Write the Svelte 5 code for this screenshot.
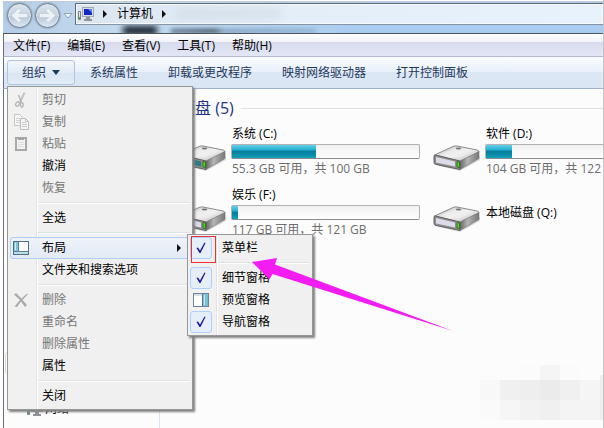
<script>
  const menuBar = ['文件(F)', '编辑(E)', '查看(V)', '工具(T)', '帮助(H)'];
  const commands = ['系统属性', '卸载或更改程序', '映射网络驱动器', '打开控制面板'];

  const organize = [
    { label: '剪切', icon: 'cut', disabled: true },
    { label: '复制', icon: 'copy', disabled: true },
    { label: '粘贴', icon: 'paste', disabled: true },
    { label: '撤消' },
    { label: '恢复', disabled: true },
    null,
    { label: '全选' },
    null,
    { label: '布局', icon: 'layout', submenu: true },
    { label: '文件夹和搜索选项' },
    null,
    { label: '删除', icon: 'delete', disabled: true },
    { label: '重命名', disabled: true },
    { label: '删除属性', disabled: true },
    { label: '属性' },
    null,
    { label: '关闭' }
  ];

  let panes = $state([
    { id: 'menubar', label: '菜单栏', on: true, marked: true },
    null,
    { id: 'details', label: '细节窗格', on: true },
    { id: 'preview', label: '预览窗格', on: false },
    { id: 'navigation', label: '导航窗格', on: true }
  ]);

  const drives = [
    { name: '系统 (C:)', used: 45, info: '55.3 GB 可用，共 100 GB', system: true },
    { name: '软件 (D:)', used: 14, info: '104 GB 可用，共 122 GB' },
    { name: '娱乐 (F:)', used: 3, info: '117 GB 可用，共 121 GB' },
    { name: '本地磁盘 (Q:)' }
  ];

  const mosaic = [
    ['', '', '#fbfbfb', '#f5f5f5', '#fbfbfb', ''],
    ['#f8f8f8', '#f0f0f0', '#eeeeee', '#ebebeb', '#f0f0f0', '#f5f5f5'],
    ['#fafafa', '#f6f6f6', '#f2f2f2', '#f0f0f0', '#f4f4f4', '#f4f4f4']
  ].flat();
</script>

{#snippet glyph(name)}
  <svg class="glyph" width="16" height="16" viewBox="0 0 16 16" aria-hidden="true">
    {#if name === 'cut'}
      <path d="M11.500 0.500 7 10.500" stroke="#c4c4c4" stroke-width="2" fill="none" />
      <path d="M5.500 3 8.500 10.500" stroke="#b2b2b2" stroke-width="1.400" fill="none" />
      <ellipse cx="4.500" cy="12" rx="1.700" ry="2.300" fill="none" stroke="#b5b5b5" stroke-width="1.300" transform="rotate(35 4.500 12)" />
      <ellipse cx="8.800" cy="12.800" rx="1.400" ry="2.200" fill="none" stroke="#b5b5b5" stroke-width="1.300" />
    {:else if name === 'copy'}
      <path d="M1.500 .5h5l3 3v8h-8z" fill="#f6f6f6" stroke="#c6c6c6" />
      <path d="M3 4.500h4M3 6.500h4M3 8.500h4" stroke="#d0d0d0" />
      <path d="M7.500 4.500h5l3 3v8h-8z" fill="#f6f6f6" stroke="#bdbdbd" />
      <path d="M9 8.500h4M9 10.500h5M9 12.500h5M12.500 4.500v3h3" stroke="#c8c8c8" fill="none" />
    {:else if name === 'paste'}
      <rect x="3" y="2" width="10" height="12" fill="#f3f3f3" stroke="#a8a8a8" stroke-width="2" />
      <path d="M5 1h6v3H5z" fill="#a5a5a5" />
      <path d="M5 6.500h6M5 8.500h6M5 10.500h6" stroke="#dedede" />
    {:else if name === 'delete'}
      <path d="M1 2.500 3 1l5.500 5.500L14 1.500l1 .5-5.500 6L14 13l-2 2-4-5.500L4 15l-2.500-.5L7 8z" fill="#aaa" />
    {:else if name === 'layout'}
      <rect x=".5" y="1.500" width="15" height="13" fill="#fff" stroke="#4f6f86" />
      <rect x="1" y="2" width="4" height="9" fill="#7cc6dc" />
      <path d="M2 3h1v7H2z" fill="#d2f1f8" />
      <path d="M5.500 2v9.500M1 11.500h14" stroke="#5e7f94" />
      <path d="M1 12h14v2H1z" fill="#bce0ea" />
    {:else if name === 'preview'}
      <rect x=".5" y="1.500" width="15" height="13" fill="#fff" stroke="#6e8496" />
      <path d="M1 2h14v2H1z" fill="#d8e0e8" />
      <path d="M10 2h5v12h-5z" fill="#78bfd6" />
      <path d="M11 3h1v10h-1z" fill="#c8eaf4" />
      <path d="M9.500 2v12" stroke="#56778e" />
    {:else if name === 'check'}
      <path d="M3.500 8 5 7.500 7 10.500 11.500 2.500 12.500 3 7.500 13H6.500z" fill="#1a1a9c" />
    {/if}
  </svg>
{/snippet}

{#snippet monitor()}
  <svg width="16" height="15" viewBox="0 0 16 15" aria-hidden="true">
    <path d="M.5 4.500h2v8h-2z" fill="#e6e6e6" stroke="#7c8084" />
    <path d="M1 10h1v2H1z" fill="#3ab83a" />
    <rect x="4.500" y=".5" width="11" height="9" fill="#d9dde2" stroke="#a3a8ae" />
    <path d="M6 2h8v6H6z" fill="#1428c8" />
    <path d="M10 2h4v4z" fill="#5d86f2" />
    <path d="M8 10h4v2h2v2H6v-2h2z" fill="#8e9399" />
  </svg>
{/snippet}

{#snippet disk(system)}
  <svg class="disk" width="48" height="28" viewBox="0 0 48 28" aria-hidden="true">
    <defs>
      <linearGradient id="lid" x1="0" y1="0" x2="1" y2="1">
        <stop offset="0" stop-color="#b8b8b8" /><stop offset=".5" stop-color="#f4f4f4" /><stop offset="1" stop-color="#b2b2b2" />
      </linearGradient>
      <linearGradient id="side" x1="0" y1="0" x2="1" y2="0">
        <stop offset="0" stop-color="#666" /><stop offset=".4" stop-color="#b5b5b5" /><stop offset="1" stop-color="#777" />
      </linearGradient>
    </defs>
    <path d="M6 22 27 27 47 16 47 12z" fill="#000" opacity=".12" />
    <path d="M1.500 11 20 2.500Q22 1.600 24 2L44 6Q46 6.500 46 8L27 17.500z" fill="url(#lid)" stroke="#8b8b8b" />
    <path d="M8 10.500 22 4 39 7.500 27 13.500z" fill="#eee" opacity=".7" />
    <ellipse cx="25.500" cy="4.500" rx="2.800" ry="1" fill="#777" />
    <path d="M27 17 46 7.500V14.500L27 25.500z" fill="url(#side)" stroke="#777" stroke-width=".6" />
    <path d="M1 12Q1 11 2.500 11L27 17V25.500L3 20.500Q1 20 1 18.500z" fill="#8d8d90" stroke="#626262" />
    <path d="M3 13 22 17.500V22.500L3 18.500z" fill={system ? '#2d7984' : '#dcdce8'} />
    <path d="M24 17.500 26.500 18V23.500L24 23z" fill="#4fdc1e" stroke="#1f5c10" stroke-width=".7" />
    {#if system}<path d="M8 3 14 2 15 7 9 10z" fill="#3d8f35" />{/if}
  </svg>
{/snippet}

<div class="window">
  <header class="glass">
    <div class="smudge one"></div>
    <div class="smudge two"></div>
    <div class="nav-buttons">
      {#each [['后退', false], ['前进', true]] as [label, forward]}
        <button class="round" aria-label={label}>
          <svg class:forward width="21" height="21" viewBox="0 0 26 26" aria-hidden="true">
            <path d="M3 13 12 4 15.500 7 11.500 10.500H23v5H11.500l4 3.500-3.500 3z" fill="#edf2f6" stroke="#c3ced9" />
          </svg>
        </button>
      {/each}
      <button class="recent" aria-label="最近">
        <svg width="10" height="7" viewBox="0 0 10 7"><path d="M1 1.500h8L5 6z" fill="#edf4fa" stroke="#8ca6c0" /></svg>
      </button>
    </div>
    <nav class="address">
      {@render monitor()}
      <span class="crumb-arrow"></span>
      <a href="#computer">计算机</a>
      <span class="crumb-arrow"></span>
      <div class="ghost"></div>
    </nav>
  </header>

  <nav class="menubar">
    {#each menuBar as item}<button>{item}</button>{/each}
  </nav>

  <div class="toolbar">
    <div class="organize">
      <button class="open" aria-haspopup="menu" aria-expanded="true">组织 <i></i></button>
      <div class="menu main-menu">
        {#each organize as item}
          {#if item}
            <div class="entry">
              <button class="row" class:active={item.submenu} disabled={item.disabled}>
                <span class="icon">{#if item.icon}{@render glyph(item.icon)}{/if}</span>
                <span>{item.label}</span>
                {#if item.submenu}<span class="crumb-arrow more"></span>{/if}
              </button>
              {#if item.submenu}
                <div class="menu sub-menu">
                  {#each panes as pane}
                    {#if pane}
                      <label class="row" for={pane.id}>
                        <span class="icon tick">
                          <input type="checkbox" id={pane.id} bind:checked={pane.on} />
                          {@render glyph(pane.on ? 'check' : 'preview')}
                          {#if pane.marked}<span class="mark"></span>{/if}
                        </span>
                        <span>{pane.label}</span>
                      </label>
                    {:else}
                      <hr />
                    {/if}
                  {/each}
                </div>
              {/if}
            </div>
          {:else}
            <hr />
          {/if}
        {/each}
      </div>
    </div>
    {#each commands as command}<button>{command}</button>{/each}
  </div>

  <div class="body">
    <aside>
      <div class="selected"></div>
      <a href="#network">{@render monitor()}网络</a>
    </aside>
    <main>
      <h2>硬盘 (5)</h2>
      <div class="drives">
        {#each drives as drive}
          <div class="drive">
            {@render disk(drive.system)}
            <div class="facts">
              <span>{drive.name}</span>
              {#if drive.info}
                <div class="gauge" role="meter" aria-label={drive.name} aria-valuenow={drive.used} aria-valuemin="0" aria-valuemax="100">
                  <div style:width="{drive.used}%"></div>
                </div>
                <span class="info">{drive.info}</span>
              {/if}
            </div>
          </div>
        {/each}
      </div>
    </main>
  </div>

  <div class="mosaic" aria-hidden="true">
    {#each mosaic as shade}<i style:background={shade}></i>{/each}
  </div>
  <svg class="pointer" width="202" height="74" viewBox="0 0 202 74" aria-hidden="true">
    <path d="M0 4 25 0 23 6.500 201 73 20.500 16 17.500 21.500z" fill="#f31cf3" />
  </svg>
</div>

<style>
  :global(body) {
    background: #fff;
  }
  .window {
    position: relative;
    display: flex;
    flex-direction: column;
    box-sizing: border-box;
    min-height: 100vh;
    padding: 1px 0 0 3px;
    border-right: 1px solid #c4c6c8;
    overflow: hidden;
    font: 12px/16px "Open Sans", "Noto Sans CJK SC", sans-serif;
    color: #000;
  }
  button,
  input {
    margin: 0;
    padding: 0;
    border: 0;
    background: none;
    font: inherit;
    color: inherit;
  }
  a {
    color: inherit;
    text-decoration: none;
  }

  .glass {
    position: relative;
    display: flex;
    height: 31px;
    border-top: 1px solid #c3cad0;
    border-bottom: 1px solid #4b535d;
    background: linear-gradient(90deg, #b4cde6, #c4daef 20%, #a9cdf0 60%);
    overflow: hidden;
  }
  .smudge {
    position: absolute;
    bottom: -2px;
    left: 120px;
    width: 34px;
    height: 9px;
    background: #15202c;
    filter: blur(3px);
  }
  .smudge.two {
    left: 168px;
    bottom: 0;
    width: 145px;
    height: 4px;
    background: linear-gradient(90deg, #5a7086, #3a4856 30%, #7d9bb8 36%, #8fb0d0);
    filter: blur(2px);
  }
  .nav-buttons {
    display: flex;
    align-items: center;
    gap: 3px;
    width: 72px;
    height: 27px;
    padding-left: 4px;
    box-sizing: border-box;
  }
  .round {
    flex: none;
    box-sizing: border-box;
    width: 25px;
    height: 25px;
    border: 1px solid #6f7f8f;
    border-radius: 50%;
    background: linear-gradient(#dbe5ee, #c6d3e0 50%, #b6c7d8 51%, #dce7f1);
    box-shadow: inset 0 0 0 1px #dde6ee, 0 0 2px #60758a;
    display: grid;
    place-items: center;
  }
  .forward {
    transform: scaleX(-1);
  }
  .recent {
    display: grid;
  }
  .address {
    position: relative;
    display: flex;
    align-items: center;
    flex: 1;
    height: 20px;
    margin-top: 1px;
    padding-left: 2px;
    border: 1px solid #5d6975;
    border-right: 0;
    border-bottom-color: #8795a3;
    background: linear-gradient(90deg, #dbe6f1, #e4eef8 40%, #e8f2fc);
    box-shadow: inset 0 0 0 1px #f6fafd;
  }
  .crumb-arrow {
    width: 0;
    height: 0;
    margin: 0 10px 0 9px;
    border: 4px solid transparent;
    border-left: 4px solid #111;
    border-right: 0;
  }
  .ghost {
    width: 105px;
    height: 10px;
    background: #c4ced7;
    opacity: 0.4;
    filter: blur(4px);
  }

  .menubar {
    display: flex;
    align-items: center;
    gap: 17px;
    height: 20px;
    padding: 2px 0 0 9px;
    border-left: 1px solid #66717e;
    border-bottom: 1px solid #b5b9d0;
    background: linear-gradient(#fff, #f2f3fa 35%, #d7dbed 36%, #e2e6f6);
  }
  .toolbar {
    display: flex;
    align-items: center;
    height: 31px;
    padding-left: 3px;
    border-left: 1px solid #66717e;
    border-bottom: 1px solid #9fb1cb;
    background: linear-gradient(#fafcff, #e8f0fa 48%, #dce7f5 50%, #dae6f4);
    color: #1e395b;
  }
  .toolbar > button {
    flex: none;
    padding: 0 15px;
  }
  .organize {
    position: relative;
  }
  .open {
    display: flex;
    align-items: center;
    gap: 6px;
    height: 25px;
    padding: 0 14px;
    border: 1px solid #b0c3dd;
    border-radius: 3px;
    background: linear-gradient(#f3f7fc, #e2ebf6 50%, #dae5f2 51%, #e3ecf7);
  }
  .open i {
    border: 4px solid transparent;
    border-top: 5px solid #1e395b;
    border-bottom: 0;
  }

  .menu {
    position: absolute;
    z-index: 2;
    box-sizing: border-box;
    padding: 2px;
    border: 1px solid #979797;
    background: linear-gradient(90deg, #f1f1f1 28px, #e2e3e3 28px, #e2e3e3 29px, #fff 29px, #fff 30px, #f0f0f0 30px);
    background-clip: padding-box;
    box-shadow: 2px 2px 2px #808080;
    color: #000;
  }
  .main-menu {
    top: 26px;
    left: 0;
    width: 186px;
  }
  .sub-menu {
    top: -3px;
    left: 177px;
    width: 126px;
  }
  .entry {
    position: relative;
  }
  .row {
    display: flex;
    align-items: center;
    box-sizing: border-box;
    width: 100%;
    height: 22px;
    text-align: left;
  }
  .row:disabled {
    color: #757575;
  }
  .row.active {
    border-radius: 3px;
    background: linear-gradient(#eff3f9, #e3eaf4);
    box-shadow: inset 0 0 0 1px #aecff7;
  }
  .icon {
    position: relative;
    display: grid;
    place-items: center;
    width: 22px;
    height: 22px;
    margin-right: 10px;
  }
  .icon > * {
    grid-area: 1 / 1;
  }
  .glyph {
    position: relative;
  }
  .tick input {
    appearance: none;
    width: 22px;
    height: 22px;
    border-radius: 3px;
  }
  .tick input:checked {
    border: 1px solid #aecff7;
    background: #e6eefa;
  }
  .mark {
    position: absolute;
    inset: -1px -4px -4px 1px;
    border: 1px solid #f03030;
  }
  .more {
    margin: 0 9px 0 auto;
  }
  hr {
    height: 1px;
    margin: 3px 1px 3px 28px;
    border: 0;
    background: #e0e0e0;
    border-bottom: 1px solid #fff;
  }

  .body {
    display: flex;
    flex: 1;
    border-left: 1px solid #66717e;
    background: #fcfcfc;
  }
  aside {
    flex: none;
    box-sizing: border-box;
    width: 156px;
    border-right: 1px solid #d6e5f5;
    padding-top: 263px;
  }
  .selected {
    height: 20px;
    margin: 0 1px;
    border: 1px solid #d9d9d9;
    border-radius: 3px;
  }
  aside a {
    display: flex;
    align-items: center;
    gap: 2px;
    height: 22px;
    margin-top: 24px;
    padding-left: 23px;
  }
  main {
    flex: 1;
    min-width: 0;
    overflow: hidden;
    padding: 8px 0 0 19px;
  }
  h2 {
    display: flex;
    align-items: center;
    gap: 7px;
    margin: 0;
    font-size: 16px;
    line-height: 22px;
    font-weight: 400;
    color: #1e3287;
  }
  h2::after {
    content: "";
    flex: 1;
    height: 1px;
    background: #e2e2e2;
  }
  .drives {
    display: grid;
    grid-template-columns: repeat(2, 254px);
    grid-auto-rows: 61px;
    padding-top: 7px;
  }
  .drive {
    display: flex;
    gap: 4px;
  }
  .disk {
    flex: none;
    margin-top: 18px;
  }
  .facts {
    display: flex;
    flex-direction: column;
    width: 189px;
  }
  .facts > span {
    padding-left: 1px;
  }
  .facts > span:only-child {
    padding-top: 18px;
  }
  .gauge {
    height: 13px;
    margin: 2px 0;
    border: 1px solid #b2b2b2;
    border-bottom-color: #8c8c8c;
    border-radius: 2px;
    background: linear-gradient(#f0f0f0, #fff);
  }
  .gauge div {
    height: 100%;
    background: linear-gradient(#65d0ea, #27b1d3 35%, #067f9c 50%, #0a8ba9 75%, #14a0bd);
  }
  .info {
    color: #6d6d6d;
  }

  .mosaic {
    position: absolute;
    right: 3px;
    bottom: 8px;
    display: grid;
    grid-template-columns: repeat(6, 20px);
    grid-template-rows: 15px 20px 20px;
  }
  .mosaic::after {
    content: "";
    position: absolute;
    right: -3px;
    bottom: 0;
    width: 3px;
    height: 45px;
    background: #eee;
  }
  .pointer {
    position: absolute;
    z-index: 3;
    top: 258px;
    left: 252px;
  }
</style>
